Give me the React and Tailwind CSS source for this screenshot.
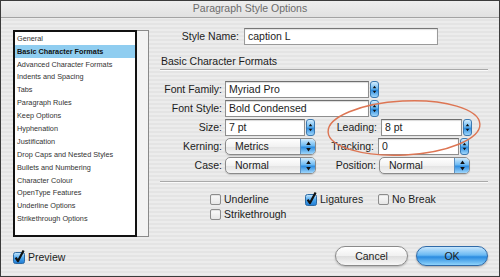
import React from 'react';

const listItems = [
  'General',
  'Basic Character Formats',
  'Advanced Character Formats',
  'Indents and Spacing',
  'Tabs',
  'Paragraph Rules',
  'Keep Options',
  'Hyphenation',
  'Justification',
  'Drop Caps and Nested Styles',
  'Bullets and Numbering',
  'Character Colour',
  'OpenType Features',
  'Underline Options',
  'Strikethrough Options',
];

const Arrows = () => (
  <svg width="9" height="17" viewBox="0 0 9 17" className="block">
    <path d="M2.2 7 L4.5 3.6 L6.8 7 Z" fill="#111" />
    <path d="M2.2 10 L4.5 13.4 L6.8 10 Z" fill="#111" />
  </svg>
);

const Spinner = () => (
  <div className="ml-[1px] flex h-[17px] w-[9px] shrink-0 items-center justify-center rounded-[3px] border border-[#3c79b0] bg-[linear-gradient(to_bottom,#d2ecfd,#6cbaf3_45%,#2f8fe2_55%,#9fd6fb)]">
    <Arrows />
  </div>
);

const Combo = ({ value, width }) => (
  <div className="flex h-[17px] items-center">
    <div
      className="flex h-[17px] items-center border border-[#8e8e8e] border-t-[#6f6f6f] bg-white pl-[3px] text-[10.5px] leading-none shadow-[inset_0_1px_1px_rgba(0,0,0,0.15)]"
      style={{ width }}
    >
      {value}
    </div>
    <Spinner />
  </div>
);

const Popup = ({ value, width }) => (
  <div
    className="flex h-[17px] items-center overflow-hidden rounded-[5px] border border-[#8a8a8a] bg-[linear-gradient(to_bottom,#ffffff,#f2f2f2_50%,#e2e2e2_51%,#f4f4f4)] shadow-[0_1px_1px_rgba(0,0,0,0.15)]"
    style={{ width }}
  >
    <span className="flex-1 pl-[9px] text-[10.5px] leading-none">{value}</span>
    <div className="flex h-full w-[15px] items-center justify-center border-l border-[#5a8fc0] bg-[linear-gradient(to_bottom,#d2ecfd,#6cbaf3_45%,#2f8fe2_55%,#9fd6fb)]">
      <Arrows />
    </div>
  </div>
);

const Checkbox = ({ checked }) =>
  checked ? (
    <svg width="12" height="13" viewBox="0 0 12 13" className="block shrink-0 overflow-visible">
      <defs>
        <linearGradient id="cbg" x1="0" y1="0" x2="0" y2="1">
          <stop offset="0" stopColor="#c9e8fd" />
          <stop offset="0.5" stopColor="#4aa6ee" />
          <stop offset="1" stopColor="#1f7ad2" />
        </linearGradient>
      </defs>
      <rect x="0.5" y="1.5" width="11" height="11" rx="2" fill="url(#cbg)" stroke="#2d6aa3" />
      <path d="M2.6 6.6 L5 10 L10.6 -0.5" fill="none" stroke="#111" strokeWidth="2.2" strokeLinejoin="round" />
    </svg>
  ) : (
    <div className="h-[11px] w-[11px] shrink-0 rounded-[2px] border border-[#8c8c8c] bg-[linear-gradient(to_bottom,#fbfbfb,#e6e6e6)] shadow-[inset_0_1px_1px_rgba(0,0,0,0.1)]" />
  );

const Label = ({ children, w = 'w-[62px]' }) => (
  <span className={`${w} shrink-0 text-right text-[10.5px] leading-none`}>{children}</span>
);

const App = () => {
  return (
    <div className="relative h-[277px] w-[500px] overflow-hidden border border-[#3b3b3b] bg-[repeating-linear-gradient(to_bottom,#ececec_0px,#ececec_2px,#e4e4e4_2px,#e4e4e4_4px)] text-[#1c1c1c] [font-family:'Liberation_Sans',Arial,sans-serif]">
      <div className="flex h-[17px] items-center justify-center border-b border-[#a3a3a3] bg-[linear-gradient(to_bottom,#eeeeee,#e1e1e1)] text-[10.5px] text-[#6c6c6c]">
        Paragraph Style Options
      </div>

      <div className="flex">
        {/* left: section list */}
        <div className="flex w-[148px] shrink-0 flex-col pl-[12px] pt-[12px]">
          <div className="flex h-[207px]">
            <div className="w-[124px] border-2 border-[#111] bg-white pl-[2px]">
              {listItems.map((item, i) => (
                <div
                  key={item}
                  className={`-ml-[2px] flex h-[12.9px] items-center pl-[2px] text-[7.3px] leading-none ${
                    i === 1 ? 'bg-[#8fcdf0] font-bold text-[#111]' : 'text-[#333]'
                  }`}
                >
                  {item}
                </div>
              ))}
            </div>
            <div className="w-[12px] border border-l-0 border-[#8a8a8a] bg-[#f3f3f3]" />
          </div>
          <div className="mt-[14px] flex items-center gap-[3px]">
            <Checkbox checked />
            <span className="text-[10.5px] leading-none">Preview</span>
          </div>
        </div>

        {/* right: options */}
        <div className="ml-[11px] flex w-[328px] flex-col pt-[10px]">
          <div className="flex items-center gap-[5px]">
            <Label w="w-[79px]">Style Name:</Label>
            <div className="flex h-[17px] w-[194px] items-center border border-[#9a9a9a] border-t-[#777] bg-white pl-[3px] text-[10.5px] leading-none shadow-[inset_0_1px_1px_rgba(0,0,0,0.12)]">
              caption L
            </div>
          </div>

          <div className="mt-[10px] h-[15px] border-b border-[#a9a9a9] pl-[1px] text-[10.5px] leading-[13px] shadow-[0_1px_0_#fafafa]">
            Basic Character Formats
          </div>

          <div className="mt-[11px] flex flex-col gap-[2px]">
            <div className="flex items-center gap-[3px]">
              <Label>Font Family:</Label>
              <Combo value="Myriad Pro" width={144} />
            </div>
            <div className="flex items-center gap-[3px]">
              <Label>Font Style:</Label>
              <Combo value="Bold Condensed" width={144} />
            </div>
            <div className="flex items-center">
              <Label>Size:</Label>
              <span className="w-[3px]" />
              <Combo value="7 pt" width={80} />
              <Label>Leading:</Label>
              <span className="w-[4px]" />
              <Combo value="8 pt" width={81} />
            </div>
            <div className="flex items-center">
              <Label>Kerning:</Label>
              <span className="w-[3px]" />
              <Popup value="Metrics" width={91} />
              <Label w="w-[58px]">Tracking:</Label>
              <span className="w-[4px]" />
              <Combo value="0" width={81} />
            </div>
            <div className="flex items-center">
              <Label>Case:</Label>
              <span className="w-[3px]" />
              <Popup value="Normal" width={91} />
              <Label w="w-[60px]">Position:</Label>
              <span className="w-[3px]" />
              <Popup value="Normal" width={91} />
            </div>
          </div>

          <div className="mt-[7px] h-0 border-t border-[#a9a9a9] shadow-[0_1px_0_#fafafa]" />

          <div className="ml-[50px] mt-[10px] flex">
            <div className="flex w-[95px] flex-col">
              <div className="flex h-[15px] items-center gap-[3px]">
                <Checkbox />
                <span className="text-[10.5px] leading-none">Underline</span>
              </div>
              <div className="flex h-[15px] items-center gap-[3px]">
                <Checkbox />
                <span className="text-[10.5px] leading-none">Strikethrough</span>
              </div>
            </div>
            <div className="flex h-[15px] w-[73px] items-center gap-[3px]">
              <Checkbox checked />
              <span className="text-[10.5px] leading-none">Ligatures</span>
            </div>
            <div className="flex h-[15px] items-center gap-[3px]">
              <Checkbox />
              <span className="text-[10.5px] leading-none">No Break</span>
            </div>
          </div>

          <div className="mt-[24px] flex justify-end gap-[8px]">
            <button className="flex h-[20px] w-[73px] items-center justify-center rounded-full border border-[#8a8a8a] bg-[linear-gradient(to_bottom,#ffffff,#f0f0f0_50%,#dedede_51%,#f7f7f7)] text-[10.5px] leading-none text-[#1c1c1c] shadow-[0_1px_2px_rgba(0,0,0,0.25)]">
              Cancel
            </button>
            <button className="flex h-[20px] w-[72px] items-center justify-center rounded-full border border-[#2f6aa8] bg-[linear-gradient(to_bottom,#c6e6fd,#6ab9f3_45%,#2a8be0_55%,#8fd3fb)] text-[10.5px] leading-none text-[#1c1c1c] shadow-[0_1px_2px_rgba(0,0,0,0.3)]">
              OK
            </button>
          </div>
        </div>
      </div>

      {/* annotation ring */}
      <svg className="pointer-events-none absolute left-0 top-0" width="500" height="277">
        <ellipse cx="403" cy="127" rx="76" ry="27" fill="none" stroke="#dd7553" strokeWidth="1.4" transform="rotate(-3 403 127)" />
      </svg>
    </div>
  );
};

export default App;
